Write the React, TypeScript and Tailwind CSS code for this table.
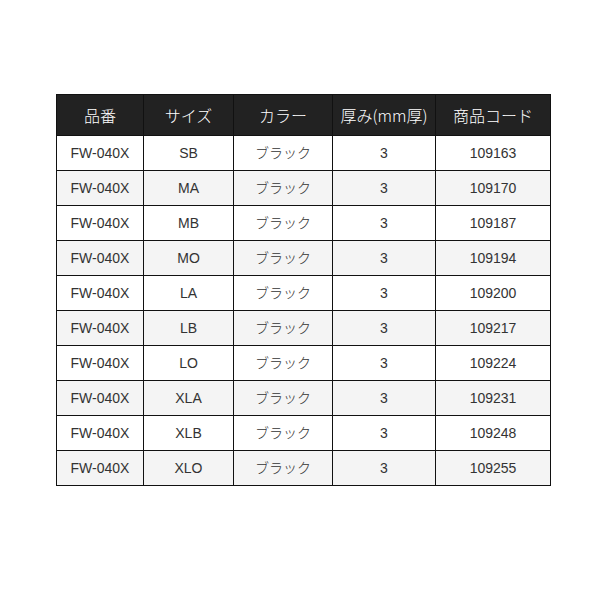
import React from "react";

const rows = [
    { size: "SB", code: "109163" },
    { size: "MA", code: "109170" },
    { size: "MB", code: "109187" },
    { size: "MO", code: "109194" },
    { size: "LA", code: "109200" },
    { size: "LB", code: "109217" },
    { size: "LO", code: "109224" },
    { size: "XLA", code: "109231" },
    { size: "XLB", code: "109248" },
    { size: "XLO", code: "109255" },
];

const headers = ["品番", "サイズ", "カラー", "厚み(mm厚)", "商品コード"];

const App = () => {
    return (
        <div
            className="w-[600px] h-[600px] bg-white pt-[94px] pl-[56px]"
            style={{ fontFamily: '"Liberation Sans", "Noto Sans CJK JP", sans-serif' }}
        >
            <table className="table-fixed border-collapse w-[494px] text-center">
                <colgroup>
                    <col className="w-[87px]" />
                    <col className="w-[90px]" />
                    <col className="w-[99px]" />
                    <col className="w-[103px]" />
                    <col className="w-[115px]" />
                </colgroup>
                <thead>
                    <tr className="h-[41px] bg-[#222222]">
                        {headers.map(h => (
                            <th
                                key={h}
                                className="border border-[#111] text-white text-[16px] font-light font-['Noto_Sans_CJK_JP',sans-serif]"
                            >
                                {h}
                            </th>
                        ))}
                    </tr>
                </thead>
                <tbody>
                    {rows.map((r, i) => (
                        <tr
                            key={r.code}
                            className={`h-[35px] text-[14px] text-[#333] ${i % 2 === 1 ? "bg-[#f4f4f4]" : "bg-white"}`}
                        >
                            <td className="border border-[#111]">FW-040X</td>
                            <td className="border border-[#111]">{r.size}</td>
                            <td className="border border-[#111] font-light">ブラック</td>
                            <td className="border border-[#111]">3</td>
                            <td className="border border-[#111]">{r.code}</td>
                        </tr>
                    ))}
                </tbody>
            </table>
        </div>
    );
};

export default App;
